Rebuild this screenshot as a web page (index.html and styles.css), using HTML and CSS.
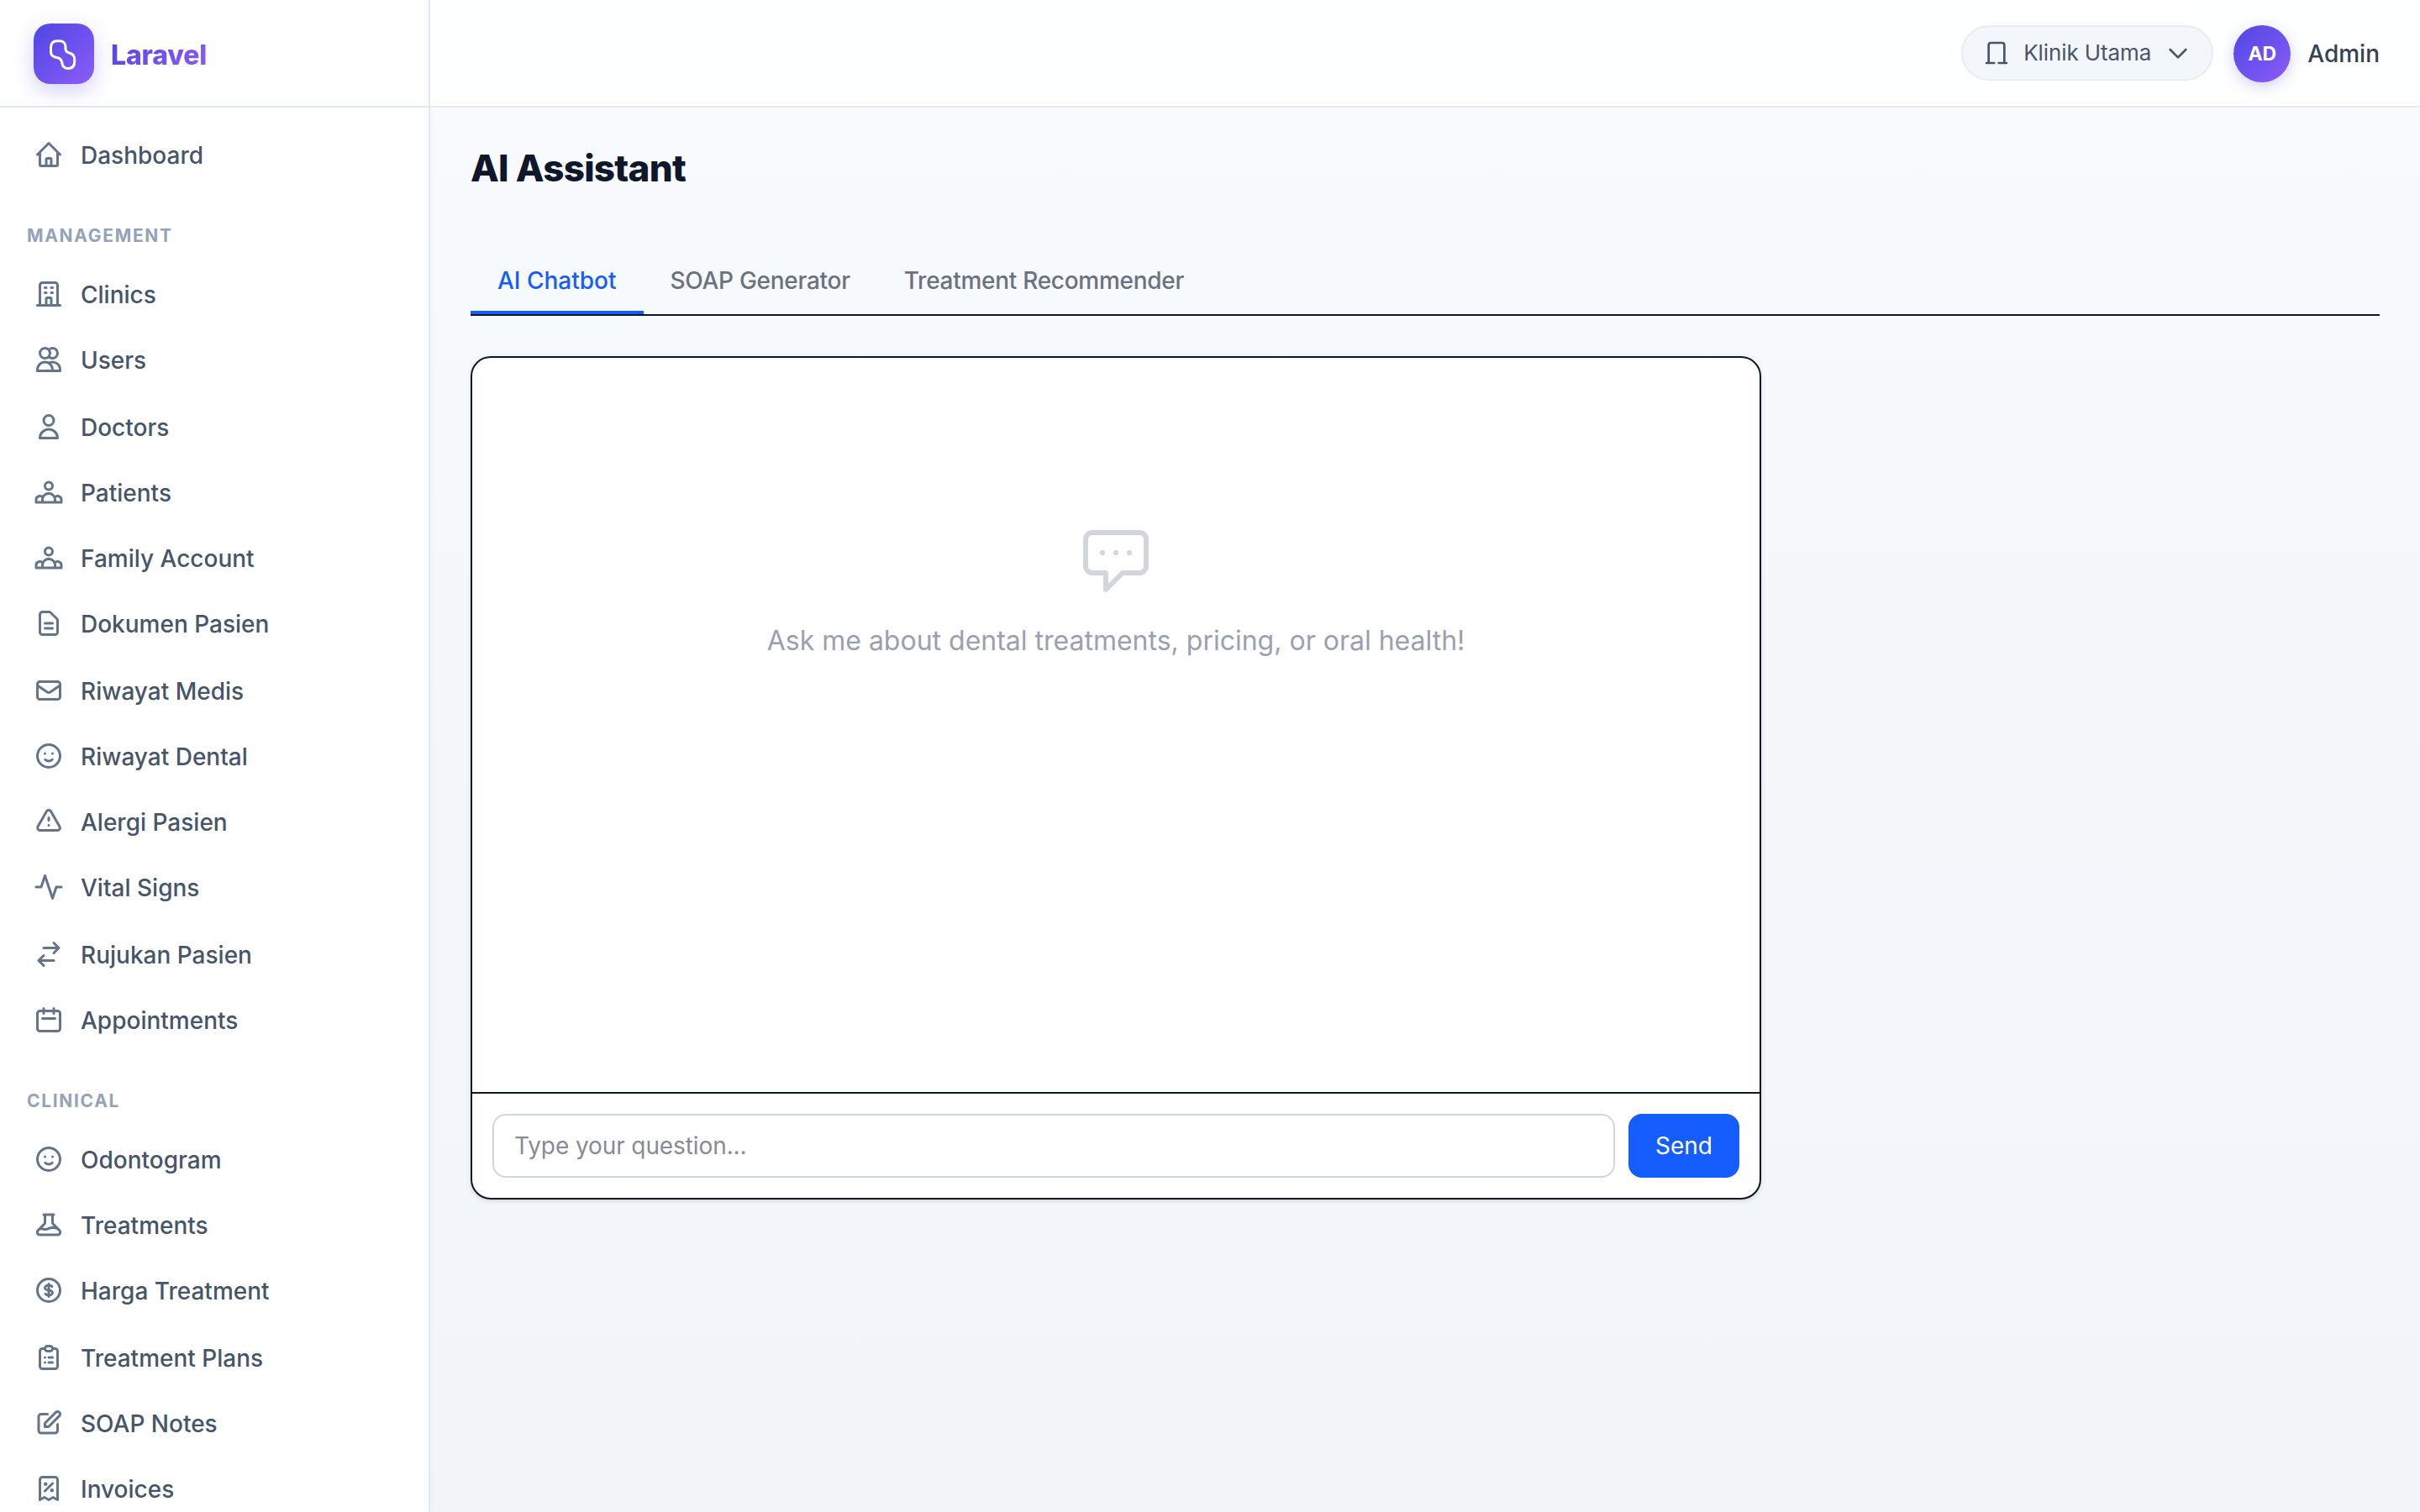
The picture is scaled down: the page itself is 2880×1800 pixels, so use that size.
FILE: index.html
```html
<!DOCTYPE html>
<html lang="en">
<head>
    <meta charset="UTF-8">
    <meta name="viewport" content="width=device-width, initial-scale=1.0">
    <title>AI Assistant</title>
    <link rel="stylesheet" href="styles.css">
</head>
<body>
    <aside class="sidebar">
        <div class="brand">
            <div class="brand-logo">
                <svg viewBox="0 0 72 72"><path d="M28 20.7h3c4.5 0 7 3 7 7v2.5c0 3 1.500 4 4.500 4.800c3.500 1 6.200 3.300 6.200 7.500v3c0 5-2.700 8-7.700 8c-4 0-6.500-2.500-7-6c-.5-4-2.500-6.500-6.500-7c-4-.6-7-3-7-7v-4.500c0-5 2.500-8.300 7.500-8.300z"/></svg>
            </div>
            <span class="brand-name">Laravel</span>
        </div>
        <nav class="nav">
            <a class="nav-item nav-home" href="#"><svg class="icon" viewBox="0 0 24 24"><path d="M3 12l9-9 9 9M5 10v10a1 1 0 001 1h12a1 1 0 001-1V10M10 21v-5a1 1 0 011-1h2a1 1 0 011 1v5"/></svg><span>Dashboard</span></a>

            <div class="nav-label">Management</div>
            <div class="nav-group management">
                <a class="nav-item" href="#"><svg class="icon" viewBox="0 0 24 24"><path d="M19 21V5a2 2 0 00-2-2H7a2 2 0 00-2 2v16m14 0h2m-2 0h-5m-9 0H3m2 0h5M9 7h1m-1 4h1m4-4h1m-1 4h1m-5 10v-5a1 1 0 011-1h2a1 1 0 011 1v5m-4 0h4"/></svg><span>Clinics</span></a>
                <a class="nav-item" href="#"><svg class="icon" viewBox="0 0 24 24"><path d="M12 4.354a4 4 0 110 5.292M15 21H3v-1a6 6 0 0112 0v1zm0 0h6v-1a6 6 0 00-9-5.197M13 7a4 4 0 11-8 0 4 4 0 018 0z"/></svg><span>Users</span></a>
                <a class="nav-item" href="#"><svg class="icon" viewBox="0 0 24 24"><path d="M16 7a4 4 0 11-8 0 4 4 0 018 0zM12 14a7 7 0 00-7 7h14a7 7 0 00-7-7z"/></svg><span>Doctors</span></a>
                <a class="nav-item" href="#"><svg class="icon" viewBox="0 0 24 24"><path d="M17 20h5v-2a3 3 0 00-5.356-1.857M17 20H7m10 0v-2c0-.656-.126-1.283-.356-1.857M7 20H2v-2a3 3 0 015.356-1.857M7 20v-2c0-.656.126-1.283.356-1.857m0 0a5.002 5.002 0 019.288 0M15 7a3 3 0 11-6 0 3 3 0 016 0z"/></svg><span>Patients</span></a>
                <a class="nav-item" href="#"><svg class="icon" viewBox="0 0 24 24"><path d="M17 20h5v-2a3 3 0 00-5.356-1.857M17 20H7m10 0v-2c0-.656-.126-1.283-.356-1.857M7 20H2v-2a3 3 0 015.356-1.857M7 20v-2c0-.656.126-1.283.356-1.857m0 0a5.002 5.002 0 019.288 0M15 7a3 3 0 11-6 0 3 3 0 016 0z"/></svg><span>Family Account</span></a>
                <a class="nav-item" href="#"><svg class="icon" viewBox="0 0 24 24"><path d="M9 12h6m-6 4h6m2 5H7a2 2 0 01-2-2V5a2 2 0 012-2h5.586a1 1 0 01.707.293l5.414 5.414a1 1 0 01.293.707V19a2 2 0 01-2 2z"/></svg><span>Dokumen Pasien</span></a>
                <a class="nav-item" href="#"><svg class="icon" viewBox="0 0 24 24"><path d="M3 8l7.89 5.26a2 2 0 002.22 0L21 8M5 19h14a2 2 0 002-2V7a2 2 0 00-2-2H5a2 2 0 00-2 2v10a2 2 0 002 2z"/></svg><span>Riwayat Medis</span></a>
                <a class="nav-item" href="#"><svg class="icon" viewBox="0 0 24 24"><path d="M14.828 14.828a4 4 0 01-5.656 0M9 10h.01M15 10h.01M21 12a9 9 0 11-18 0 9 9 0 0118 0z"/></svg><span>Riwayat Dental</span></a>
                <a class="nav-item" href="#"><svg class="icon" viewBox="0 0 24 24"><path d="M12 9v2m0 4h.01m-6.938 4h13.856c1.54 0 2.502-1.667 1.732-3L13.732 4c-.77-1.333-2.694-1.333-3.464 0L3.34 16c-.77 1.333.192 3 1.732 3z"/></svg><span>Alergi Pasien</span></a>
                <a class="nav-item" href="#"><svg class="icon" viewBox="0 0 24 24"><path d="M22 12h-4l-3 9L9 3l-3 9H2"/></svg><span>Vital Signs</span></a>
                <a class="nav-item" href="#"><svg class="icon" viewBox="0 0 24 24"><path d="M8 7h12m0 0l-4-4m4 4l-4 4m0 6H4m0 0l4 4m-4-4l4-4"/></svg><span>Rujukan Pasien</span></a>
                <a class="nav-item" href="#"><svg class="icon" viewBox="0 0 24 24"><path d="M8 7V3m8 4V3m-9 8h10M5 21h14a2 2 0 002-2V7a2 2 0 00-2-2H5a2 2 0 00-2 2v12a2 2 0 002 2z"/></svg><span>Appointments</span></a>
            </div>

            <div class="nav-label nav-label-clinical">Clinical</div>
            <div class="nav-group clinical">
                <a class="nav-item" href="#"><svg class="icon" viewBox="0 0 24 24"><path d="M14.828 14.828a4 4 0 01-5.656 0M9 10h.01M15 10h.01M21 12a9 9 0 11-18 0 9 9 0 0118 0z"/></svg><span>Odontogram</span></a>
                <a class="nav-item" href="#"><svg class="icon" viewBox="0 0 24 24"><path d="M19.428 15.428a2 2 0 00-1.022-.547l-2.387-.477a6 6 0 00-3.86.517l-.318.158a6 6 0 01-3.86.517L6.05 15.21a2 2 0 00-1.806.547M8 4h8l-1 1v5.172a2 2 0 00.586 1.414l5 5c1.26 1.26.367 3.414-1.415 3.414H4.828c-1.782 0-2.674-2.154-1.414-3.414l5-5A2 2 0 009 10.172V5L8 4z"/></svg><span>Treatments</span></a>
                <a class="nav-item" href="#"><svg class="icon" viewBox="0 0 24 24"><path d="M12 8c-1.657 0-3 .895-3 2s1.343 2 3 2 3 .895 3 2-1.343 2-3 2m0-8c1.11 0 2.08.402 2.599 1M12 8V7m0 1v8m0 0v1m0-1c-1.11 0-2.08-.402-2.599-1M21 12a9 9 0 11-18 0 9 9 0 0118 0z"/></svg><span>Harga Treatment</span></a>
                <a class="nav-item" href="#"><svg class="icon" viewBox="0 0 24 24"><path d="M9 5H7a2 2 0 00-2 2v12a2 2 0 002 2h10a2 2 0 002-2V7a2 2 0 00-2-2h-2M9 5a2 2 0 002 2h2a2 2 0 002-2M9 5a2 2 0 012-2h2a2 2 0 012 2m-3 7h3m-3 4h3m-6-4h.01M9 16h.01"/></svg><span>Treatment Plans</span></a>
                <a class="nav-item" href="#"><svg class="icon" viewBox="0 0 24 24"><path d="M11 5H6a2 2 0 00-2 2v11a2 2 0 002 2h11a2 2 0 002-2v-5m-1.414-9.414a2 2 0 112.828 2.828L11.828 15H9v-2.828l8.586-8.586z"/></svg><span>SOAP Notes</span></a>
                <a class="nav-item" href="#"><svg class="icon" viewBox="0 0 24 24"><path d="M9 14l6-6m-5.5.5h.01m4.99 5h.01M19 21V5a2 2 0 00-2-2H7a2 2 0 00-2 2v16l3.5-2 3.5 2 3.5-2 3.5 2zM10 8.5a.5.5 0 11-1 0 .5.5 0 011 0zm5 5a.5.5 0 11-1 0 .5.5 0 011 0z"/></svg><span>Invoices</span></a>
            </div>
        </nav>
    </aside>

    <div class="page">
        <header class="topbar">
            <button class="clinic-switch">
                <svg class="icon" viewBox="0 0 24 24"><path d="M19 21V5a2 2 0 00-2-2H7a2 2 0 00-2 2v16m14 0h2m-2 0h-5m-9 0H3m2 0h5"/></svg>
                <span>Klinik Utama</span>
                <svg class="icon" viewBox="0 0 24 24"><path d="M19 9l-7 7-7-7"/></svg>
            </button>
            <div class="user">
                <div class="avatar">AD</div>
                <span class="user-name">Admin</span>
            </div>
        </header>

        <main class="content">
            <h1>AI Assistant</h1>

            <div class="tabs">
                <button class="tab active">AI Chatbot</button>
                <button class="tab">SOAP Generator</button>
                <button class="tab">Treatment Recommender</button>
            </div>

            <section class="chat">
                <div class="chat-messages">
                    <svg class="chat-icon" viewBox="0 0 24 24"><path d="M8 10h.01M12 10h.01M16 10h.01M9 16H5a2 2 0 01-2-2V6a2 2 0 012-2h14a2 2 0 012 2v8a2 2 0 01-2 2h-5l-5 5v-5z"/></svg>
                    <p>Ask me about dental treatments, pricing, or oral health!</p>
                </div>
                <form class="chat-form">
                    <input type="text" placeholder="Type your question...">
                    <button type="button">Send</button>
                </form>
            </section>
        </main>
    </div>
</body>
</html>
```

FILE: styles.css
```css
* {
    box-sizing: border-box;
}
body {
    margin: 0;
    height: 1800px;
    display: flex;
    overflow: hidden;
    font-family: Inter, sans-serif;
    font-size: 28px;
    line-height: 40px;
    color: #0f172a;
    background: linear-gradient(180deg, #f8fafc 0%, #f1f5f9 100%);
}
a {
    text-decoration: none;
}
button, input {
    font-family: inherit;
    font-size: 28px;
    line-height: 40px;
}
button {
    cursor: pointer;
}
svg {
    display: block;
    flex-shrink: 0;
    fill: none;
    stroke: currentColor;
    stroke-width: 2;
    stroke-linecap: round;
    stroke-linejoin: round;
}

/* Sidebar */
.sidebar {
    width: 512px;
    height: 1800px;
    flex-shrink: 0;
    overflow: hidden;
    background: #fff;
    border-right: 2px solid #e2e8f0;
    box-shadow: 2px 0 6px rgba(15, 23, 42, 0.02);
}
.brand {
    height: 128px;
    display: flex;
    align-items: center;
    gap: 20px;
    padding: 2px 40px 0;
    border-bottom: 2px solid #e2e8f0;
}
.brand-logo {
    width: 72px;
    height: 72px;
    border-radius: 20px;
    color: #fff;
    background: linear-gradient(135deg, #4f46e5, #8b5cf6);
    box-shadow: 0 8px 24px rgba(79, 70, 229, 0.25);
}
.brand-logo svg {
    stroke-width: 3;
}
.brand-name {
    padding-top: 3px;
    font-size: 32px;
    font-weight: 800;
    letter-spacing: -0.005em;
    color: transparent;
    background: linear-gradient(135deg, #4f46e5, #8b5cf6);
    -webkit-background-clip: text;
    background-clip: text;
}
.nav {
    padding: 16px 20px;
}
.nav-item {
    height: 78px;
    display: flex;
    align-items: center;
    gap: 20px;
    padding: 0 20px;
    font-weight: 500;
    color: #475569;
}
.nav-item span {
    padding-top: 1px;
}
.nav-item .icon {
    width: 36px;
    height: 36px;
    color: #64748b;
}
.nav-home {
    height: 80px;
}
.management .nav-item:nth-child(4n+3),
.clinical .nav-item:nth-child(4n+4) {
    margin-top: 2px;
}
.nav-label {
    padding: 41px 12px 14px;
    font-size: 21px;
    line-height: 32px;
    font-weight: 700;
    letter-spacing: 0.08em;
    text-transform: uppercase;
    color: #94a3b8;
}
.nav-label-clinical {
    padding-top: 42px;
}

/* Top bar */
.page {
    flex: 1;
    min-width: 0;
}
.topbar {
    height: 128px;
    display: flex;
    align-items: center;
    justify-content: flex-end;
    gap: 24px;
    padding: 0 48px;
    background: rgba(255, 255, 255, 0.85);
    border-bottom: 2px solid #e8edf3;
}
.clinic-switch {
    height: 66px;
    display: flex;
    align-items: center;
    gap: 16px;
    padding: 0 24px;
    border: 2px solid #e8edf2;
    border-radius: 33px;
    background: #f3f6fb;
    font-size: 26px;
    letter-spacing: -0.1px;
    color: #475569;
}
.clinic-switch .icon {
    width: 32px;
    height: 32px;
}
.user {
    display: flex;
    align-items: center;
    gap: 20px;
    padding-top: 2px;
}
.avatar {
    width: 68px;
    height: 68px;
    display: flex;
    align-items: center;
    justify-content: center;
    border-radius: 50%;
    font-size: 23px;
    font-weight: 700;
    color: #fff;
    background: linear-gradient(135deg, #4f46e5, #8b5cf6);
    box-shadow: 0 4px 16px rgba(79, 70, 229, 0.25);
}
.user-name {
    font-weight: 500;
    color: #334155;
}

/* Content */
.content {
    padding: 44px 48px;
}
h1 {
    margin: 0 0 70px;
    font-size: 44px;
    line-height: 56px;
    font-weight: 800;
    letter-spacing: -0.017em;
}
.tabs {
    display: flex;
    border-bottom: 2px solid #0f172a;
}
.tab {
    padding: 16px 32px;
    border: none;
    border-bottom: 4px solid transparent;
    background: none;
    font-weight: 500;
    letter-spacing: -0.01em;
    color: #6a7282;
}
.tab.active {
    border-color: #155dfc;
    letter-spacing: 0;
    color: #155dfc;
}
.chat {
    width: 1536px;
    height: 1004px;
    margin-top: 48px;
    display: flex;
    flex-direction: column;
    border: 2px solid #0f172a;
    border-radius: 24px;
    background: #fff;
    box-shadow: 0 2px 6px rgba(0, 0, 0, 0.1), 0 2px 4px -2px rgba(0, 0, 0, 0.1);
}
.chat-messages {
    flex: 1;
    display: flex;
    flex-direction: column;
    align-items: center;
    padding-top: 192px;
    color: #99a1af;
}
.chat-icon {
    width: 96px;
    height: 96px;
    stroke-width: 1.5;
    color: #d1d5dc;
}
.chat-messages p {
    margin: 25px 0 0;
    font-size: 32px;
    line-height: 48px;
}
.chat-form {
    display: flex;
    gap: 16px;
    padding: 24px;
    border-top: 2px solid #0f172a;
}
.chat-form input {
    flex: 1;
    height: 76px;
    padding: 0 24px;
    border: 2px solid #d1d5dc;
    border-radius: 16px;
    background: #fff;
}
.chat-form input::placeholder {
    letter-spacing: -0.1px;
    color: #868b95;
}
.chat-form button {
    width: 132px;
    padding: 0;
    border: none;
    border-radius: 16px;
    background: #155dfc;
    color: #fff;
}
```
